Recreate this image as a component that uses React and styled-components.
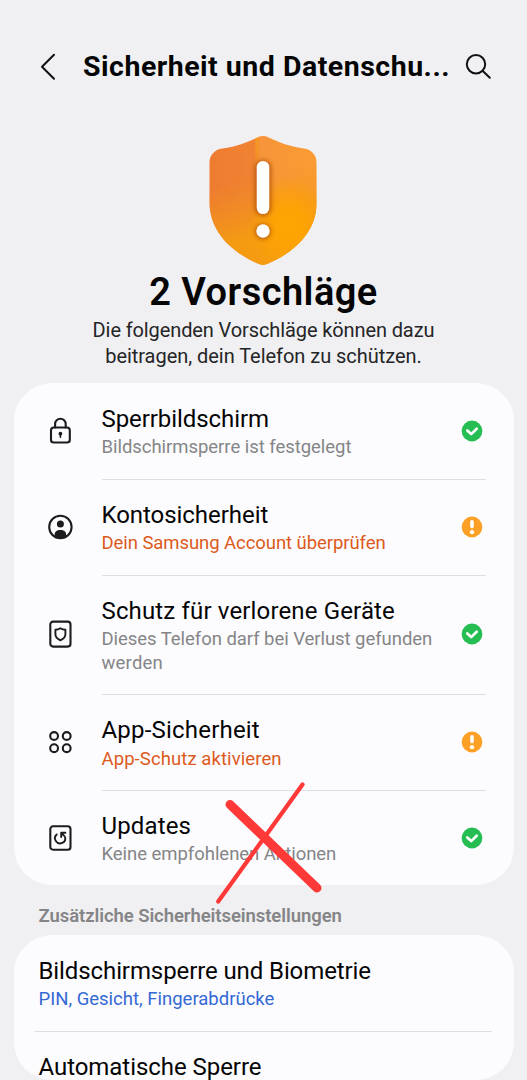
import React from "react";
import styled, { createGlobalStyle } from "styled-components";

const GlobalStyle = createGlobalStyle`
  * {
    box-sizing: border-box;
  }

  body {
    margin: 0;
    background: #f0f0f2;
    font-family: "Roboto", "Liberation Sans", sans-serif;
    overflow: hidden;
  }
`;

const Screen = styled.div`
  position: relative;
  width: 527px;
  height: 1080px;
  overflow: hidden;
  display: flex;
  flex-direction: column;
  background: #f0f0f2;
  color: #050505;
`;

const Header = styled.header`
  display: flex;
  align-items: center;
  height: 136px;
  padding: 0 34.5px 3px 38px;
`;

const PageTitle = styled.h1`
  flex: 1;
  margin: 0 0 0 25px;
  font-size: 28.5px;
  font-weight: 700;
  letter-spacing: 0.5px;
  white-space: nowrap;
`;

const Hero = styled.section`
  display: flex;
  flex-direction: column;
  align-items: center;
  height: 247px;
  text-align: center;

  > svg {
    margin-right: 1px;
  }
`;

const HeroTitle = styled.h2`
  margin: 1px 0 0;
  font-size: 38px;
  line-height: 48px;
  font-weight: 600;
  letter-spacing: 0.45px;
`;

const HeroText = styled.p`
  margin: 1px 0 0;
  font-size: 20px;
  line-height: 26px;
  color: #252527;
`;

const Line = styled.span`
  display: block;
  white-space: nowrap;
  letter-spacing: ${(props) => props.$spacing || 0}px;
`;

const Card = styled.section`
  margin: 0 13.5px;
  padding-top: 1px;
  height: ${(props) => props.$height}px;
  flex-shrink: 0;
  overflow: hidden;
  border-radius: 38px;
  background: #fcfcfe;
`;

const Row = styled.div`
  display: flex;
`;

const IconSlot = styled.div`
  display: flex;
  align-items: center;
  justify-content: center;
  width: 88px;
  padding: 0 0 2px 5px;
`;

const RowMain = styled.div`
  display: flex;
  flex: 1;
  align-items: center;
  margin-right: 27.5px;
  border-bottom: 1px solid ${(props) => (props.$last ? "transparent" : "#dedee0")};
`;

const RowText = styled.div`
  flex: 1;
  padding: 21px 0 19px;
`;

const RowTitle = styled.div`
  font-size: 24px;
  line-height: 28px;
  margin-bottom: 3.4px;
  white-space: nowrap;
  letter-spacing: ${(props) => props.$spacing || 0}px;
`;

const tones = {
  muted: "#858587",
  alert: "#dc5a1c",
  link: "#3468d4",
};

const RowNote = styled.div`
  font-size: 18.5px;
  line-height: 23.5px;
  color: ${(props) => tones[props.$tone]};
`;

const StatusSlot = styled.div`
  display: flex;
  padding: 0 3px 1px 0;
`;

const SectionLabel = styled.h3`
  flex-shrink: 0;
  margin: 0;
  height: 50px;
  padding: 0 38.5px;
  font-size: 18.5px;
  line-height: 63px;
  font-weight: 600;
  color: #858587;
  white-space: nowrap;
  letter-spacing: -0.07px;
`;

const SettingRow = styled.div`
  height: 96px;
  margin: 0 22px 0 21.5px;
  padding: 21px 3.5px 0;
  border-bottom: 1px solid #dedee0;
`;

const Scribble = styled.svg`
  position: absolute;
  left: 210px;
  top: 776px;
  pointer-events: none;
`;

const BackIcon = () => (
  <svg width="20" height="30" viewBox="0 0 20 30" fill="none" stroke="#111" strokeWidth="2" strokeLinecap="round">
    <path d="M16 2.800 4 14.700 16 26.700" strokeLinejoin="round" />
  </svg>
);

const SearchIcon = () => (
  <svg width="28" height="28" viewBox="0 0 28 28" fill="none" stroke="#111" strokeWidth="2" strokeLinecap="round">
    <circle cx="11" cy="11.200" r="9.200" />
    <path d="m17.800 18 7 6.800" />
  </svg>
);

const ShieldIcon = () => (
  <svg width="110" height="131" viewBox="18.3 16 110 131">
    <defs>
      <linearGradient id="base" x1="0" y1="0" x2="1" y2="0">
        <stop offset="0" stopColor="#ee7b30" />
        <stop offset="0.43" stopColor="#f08333" />
        <stop offset="0.47" stopColor="#f6953a" />
        <stop offset="1" stopColor="#fb9c32" />
      </linearGradient>
      <linearGradient id="glow" x1="0.42" y1="0.25" x2="0.54" y2="0.85">
        <stop offset="0.1" stopColor="#f0931a" stopOpacity="0" />
        <stop offset="0.85" stopColor="#f49b12" />
      </linearGradient>
      <radialGradient id="sun" cx="0.72" cy="0.68" r="0.36">
        <stop offset="0" stopColor="#ffa500" />
        <stop offset="0.4" stopColor="#ffa500" stopOpacity="0.8" />
        <stop offset="1" stopColor="#ffa500" stopOpacity="0" />
      </radialGradient>
      <linearGradient id="seam" x1="0" y1="0" x2="0" y2="1">
        <stop offset="0" stopColor="#f59a1c" />
        <stop offset="1" stopColor="#f59a1c" stopOpacity="0" />
      </linearGradient>
      <filter id="shade" x="-100%" y="-30%" width="300%" height="160%">
        <feGaussianBlur stdDeviation="2.6" />
      </filter>
      <clipPath id="shield">
        <path d="M70 16.500Q73.300 15.400 76.700 16.500C87 21 98 26.500 114 28.400C122 29.500 127 35 127 42.500V82C127 112 105 132 78 143.800Q73.300 146 68.700 143.800C42 132 19.800 112 19.800 82V42.500C19.800 35 25 29.500 32.500 28.400C49 26.500 60 21 70 16.500Z" />
      </clipPath>
    </defs>
    <g clipPath="url(#shield)">
      <path d="M18 14h112v134H18z" fill="url(#base)" />
      <path d="M18 14h112v134H18z" fill="url(#glow)" />
      <path d="M18 14h112v134H18z" fill="url(#sun)" />
      <path d="M65.500 14h3.500v40h-3.500z" fill="url(#seam)" />
    </g>
    <g fill="#a84a08" opacity="0.85" filter="url(#shade)">
      <rect x="65.500" y="40.500" width="15.600" height="55" rx="7" />
      <circle cx="73.300" cy="111.500" r="7.600" />
    </g>
    <rect x="67" y="41" width="12.600" height="53" rx="6.300" fill="#fff" />
    <circle cx="73.300" cy="111" r="6.700" fill="#fff" />
  </svg>
);

const LineIcon = ({ children }) => (
  <svg width="30" height="30" viewBox="0 0 30 30" fill="none" stroke="#1c1c1f" strokeWidth="2.1" strokeLinecap="round" strokeLinejoin="round">
    <g transform="translate(0.4 0)">{children}</g>
  </svg>
);

const icons = {
  lock: (
    <LineIcon>
      <rect x="5.600" y="11.500" width="18.800" height="15" rx="2.800" />
      <path d="M9.700 11.500V8a5.300 5.300 0 0 1 10.600 0v3.500" />
      <circle cx="15" cy="17.700" r="1.900" fill="#1c1c1f" stroke="none" />
      <path d="M15 18v3.200" strokeWidth="1.600" />
    </LineIcon>
  ),
  account: (
    <LineIcon>
      <circle cx="15" cy="15" r="11.200" />
      <circle cx="15" cy="12" r="3.500" fill="#1c1c1f" stroke="none" />
      <path d="M9.200 24.500v-1.700c0-3 2-4.800 5.800-4.800s5.800 1.800 5.800 4.800v1.700Q15 28 9.200 24.500Z" fill="#1c1c1f" stroke="none" />
    </LineIcon>
  ),
  device: (
    <LineIcon>
      <rect x="4.900" y="2.600" width="20.200" height="25" rx="2.800" />
      <path d="M15 9.200c1.700 1 3.200 1.400 5 1.600v4.500c0 2.700-2 4.700-5 6-3-1.300-5-3.300-5-6v-4.500c1.800-.2 3.300-.6 5-1.600Z" strokeWidth="1.900" />
    </LineIcon>
  ),
  apps: (
    <LineIcon>
      <circle cx="8.700" cy="9" r="3.900" />
      <circle cx="21.300" cy="9" r="3.900" />
      <circle cx="8.700" cy="21.200" r="3.900" />
      <circle cx="21.300" cy="21.200" r="3.900" />
    </LineIcon>
  ),
  update: (
    <LineIcon>
      <rect x="4.900" y="3.300" width="20.200" height="23.400" rx="2.800" />
      <path d="M11.300 11.500a5.100 5.100 0 1 0 8.300 2.400" strokeWidth="1.900" />
      <path d="M20 9.800h-4.200v4.200M16.300 10.300l2.500 2.500" strokeWidth="1.900" />
    </LineIcon>
  ),
};

const StatusIcon = ({ ok }) => (
  <svg width="22" height="22" viewBox="0 0 22 22">
    <circle cx="11" cy="11" r="10.400" fill={ok ? "#26bd53" : "#fda026"} />
    {ok ? (
      <path d="m6.300 10.500 3.900 3.600 5.500-5.400" fill="none" stroke="#fff" strokeWidth="2.700" strokeLinecap="round" strokeLinejoin="round" />
    ) : (
      <g fill="#fff">
        <rect x="9.200" y="3.900" width="3.600" height="8.500" rx="1.800" />
        <circle cx="11" cy="16.200" r="2.100" />
      </g>
    )}
  </svg>
);

const checks = [
  {
    icon: "lock",
    title: "Sperrbildschirm",
    spacing: -0.07,
    ok: true,
    note: [{ text: "Bildschirmsperre ist festgelegt", spacing: -0.04 }],
  },
  {
    icon: "account",
    title: "Kontosicherheit",
    spacing: -0.05,
    ok: false,
    note: [{ text: "Dein Samsung Account überprüfen", spacing: -0.07 }],
  },
  {
    icon: "device",
    title: "Schutz für verlorene Geräte",
    spacing: 0.15,
    ok: true,
    note: [
      { text: "Dieses Telefon darf bei Verlust gefunden", spacing: -0.05 },
      { text: "werden", spacing: 0.2 },
    ],
  },
  {
    icon: "apps",
    title: "App-Sicherheit",
    spacing: 0.2,
    ok: false,
    note: [{ text: "App-Schutz aktivieren", spacing: 0.09 }],
  },
  {
    icon: "update",
    title: "Updates",
    spacing: 0.15,
    ok: true,
    note: [{ text: "Keine empfohlenen Aktionen", spacing: -0.04 }],
  },
];

const App = () => {
  return (
    <Screen>
      <GlobalStyle />
      <Header>
        <BackIcon />
        <PageTitle>Sicherheit und Datenschu...</PageTitle>
        <SearchIcon />
      </Header>

      <Hero>
        <ShieldIcon />
        <HeroTitle>2 Vorschläge</HeroTitle>
        <HeroText>
          <Line $spacing={-0.11}>Die folgenden Vorschläge können dazu</Line>
          <Line $spacing={-0.04}>beitragen, dein Telefon zu schützen.</Line>
        </HeroText>
      </Hero>

      <Card $height={502}>
        {checks.map((item, i) => (
          <Row key={item.title}>
            <IconSlot>{icons[item.icon]}</IconSlot>
            <RowMain $last={i === checks.length - 1}>
              <RowText>
                <RowTitle $spacing={item.spacing}>{item.title}</RowTitle>
                <RowNote $tone={item.ok ? "muted" : "alert"}>
                  {item.note.map((line) => (
                    <Line key={line.text} $spacing={line.spacing}>
                      {line.text}
                    </Line>
                  ))}
                </RowNote>
              </RowText>
              <StatusSlot>
                <StatusIcon ok={item.ok} />
              </StatusSlot>
            </RowMain>
          </Row>
        ))}
      </Card>

      <SectionLabel>Zusätzliche Sicherheitseinstellungen</SectionLabel>

      <Card $height={145}>
        <SettingRow>
          <RowTitle $spacing={-0.1}>Bildschirmsperre und Biometrie</RowTitle>
          <RowNote $tone="link">PIN, Gesicht, Fingerabdrücke</RowNote>
        </SettingRow>
        <SettingRow>
          <RowTitle $spacing={-0.05}>Automatische Sperre</RowTitle>
        </SettingRow>
      </Card>

      <Scribble width="120" height="136" viewBox="210 776 120 136" stroke="#ff3838" strokeLinecap="round">
        <path d="M302.500 784.500 218.200 901.500" strokeWidth="4.200" />
        <path d="M230 804.500 317 888" strokeWidth="9" />
      </Scribble>
    </Screen>
  );
};

export default App;
